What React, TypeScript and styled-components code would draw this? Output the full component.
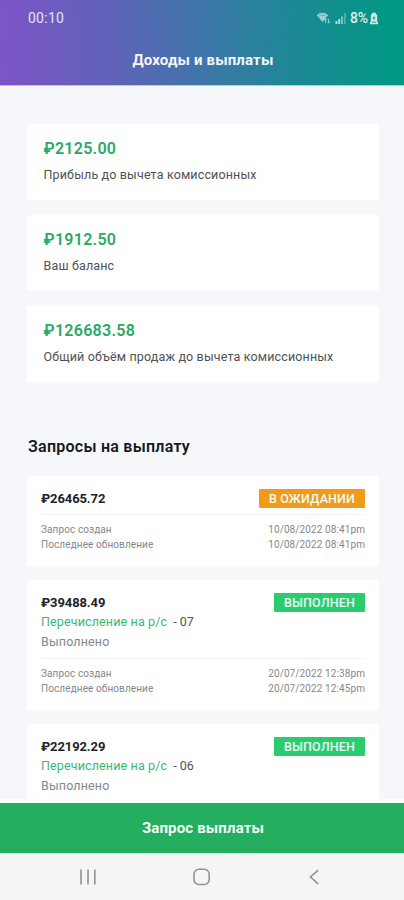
import React from "react";
import styled, { createGlobalStyle } from "styled-components";

const GlobalStyle = createGlobalStyle`
  * { box-sizing: border-box; }
  body { margin: 0; background: #f5f7fb; font-family: Roboto, "Noto Sans", sans-serif; }
`;

const Screen = styled.div`
  width: 404px;
  height: 900px;
  display: flex;
  flex-direction: column;
  overflow: hidden;
  background: #f5f7fb;
`;

const Header = styled.header`
  flex: none;
  height: 86px;
  border-bottom: 1px solid #b9c6dc;
  background: linear-gradient(86deg, #7e54c7 0%, #5f62b8 28%, #3f76aa 50%, #1f8697 70%, #009983 98%);
  color: #f2f7fc;
`;

const StatusBar = styled.div`
  height: 36px;
  padding: 0 25px 0 28px;
  display: flex;
  justify-content: space-between;
  align-items: center;
  font-size: 14px;
  line-height: 16px;
  color: #e0e6f5;
`;

const Clock = styled.span`
  letter-spacing: 0.25px;
`;

const StatusIcons = styled.div`
  display: flex;
  align-items: center;
`;

const Percent = styled.span`
  margin: 0 1px 0 3px;
  font-weight: 500;
  font-size: 14px;
  letter-spacing: -0.1px;
  color: #d9f1ee;
`;

const Title = styled.h1`
  margin: 14px 0 0;
  text-align: center;
  font-size: 15px;
  line-height: 20px;
  font-weight: 700;
  letter-spacing: 0.15px;
  padding-left: 2px;
`;

const Content = styled.main`
  flex: none;
  height: 713px;
  padding: 38px 25px 0 27px;
  overflow: hidden;
`;

const Summary = styled.section`
  display: flex;
  flex-direction: column;
  gap: 15px;
`;

const SummaryCard = styled.article`
  height: 76px;
  padding: 15px 16.5px 0;
  background: #fff;
  border-radius: 2px;
`;

const Sum = styled.div`
  font-size: 16px;
  line-height: 20px;
  font-weight: 600;
  letter-spacing: 0.28px;
  color: #2ba866;
`;

const SumLabel = styled.div`
  margin-top: 8px;
  font-size: 12.5px;
  line-height: 16px;
  letter-spacing: 0.15px;
  color: #505254;
`;

const SectionTitle = styled.h2`
  margin: 55px 0 0 1px;
  font-size: 16px;
  line-height: 20px;
  font-weight: 600;
  letter-spacing: 0.25px;
  color: #17191d;
`;

const Requests = styled.section`
  margin-top: 19px;
  display: flex;
  flex-direction: column;
  gap: 14px;
`;

const RequestCard = styled.article`
  flex: none;
  padding: 13px 14px 14px;
  background: #fff;
  border-radius: 2px;
`;

const TopRow = styled.div`
  display: flex;
  justify-content: space-between;
  height: 20px;
  align-items: flex-start;
`;

const Amount = styled.div`
  font-size: 13px;
  line-height: 20px;
  font-weight: 700;
  letter-spacing: -0.1px;
  color: #222329;
`;

const Badge = styled.span<{ $pending?: boolean }>`
  flex: none;
  width: ${(p) => (p.$pending ? 106 : 91)}px;
  height: 19px;
  border-radius: 1px;
  text-align: center;
  font-size: 12.5px;
  line-height: 19px;
  font-weight: 500;
  letter-spacing: 0.15px;
  color: #e9fff0;
  background: ${(p) => (p.$pending ? "#f29a1b" : "#2bcb70")};
`;

const Transfer = styled.div`
  margin: -1px 0 1px;
  font-size: 12.5px;
  line-height: 19px;
  color: #505254;
  white-space: pre;
  display: flex;
`;

const TransferName = styled.span`
  color: #3cb478;
  margin-right: 6px;
  letter-spacing: 0.14px;
`;

const State = styled.div`
  font-size: 12.5px;
  line-height: 20px;
  letter-spacing: 0.15px;
  color: #85878a;
`;

const Dates = styled.div<{ $gap: number }>`
  margin-top: ${(p) => p.$gap}px;
  padding-top: 7px;
  border-top: 1px solid #f2f3f4;
`;

const DateRow = styled.div`
  display: flex;
  justify-content: space-between;
  font-size: 10px;
  line-height: 15px;
  letter-spacing: 0.1px;
  color: #85878a;
`;

const PayoutButton = styled.button`
  flex: none;
  margin: 0;
  padding: 0 0 0 2px;
  height: 54px;
  border: 0;
  border-top: 4px solid #fbfefd;
  background: #25ae60;
  color: #f1fff6;
  font-family: inherit;
  font-size: 15px;
  font-weight: 700;
  line-height: 20px;
  letter-spacing: 0.15px;
`;

const NavBar = styled.nav`
  flex: 1;
  display: flex;
  align-items: center;
  justify-content: space-between;
  padding: 1px 82px 0 79px;
  background: #f5f5f5;
`;

const WifiIcon = () => (
  <svg width="18" height="14" viewBox="0 0 18 14" fill="none">
    <path d="M0.8 4.2C4 .9 9 .9 12.2 4.2L6.5 11Z" fill="#d5ebee" fillOpacity=".7" />
    <path d="M2.5 5.6C5 3.5 8 3.5 10.5 5.6" stroke="#2d8996" strokeWidth=".6" />
    <path d="M9.5 12V8M8.2 9.2 9.5 7.7l1.3 1.5M12.5 8v4m-1.3-1.3 1.3 1.4 1.3-1.4" stroke="#b8dcde" strokeWidth=".8" />
  </svg>
);

const SignalIcon = () => (
  <svg width="13" height="13" viewBox="0 0 13 13" fill="#b9e1dd">
    <rect x="1.5" y="9" width="1.8" height="3" />
    <rect x="4.3" y="7" width="1.8" height="5" />
    <rect x="7.1" y="4.5" width="1.8" height="7.5" fillOpacity=".7" />
    <rect x="10.2" y="1" width="1.4" height="11" fillOpacity=".5" />
  </svg>
);

const BatteryIcon = () => (
  <svg width="10" height="13" viewBox="0 0 10 13">
    <path d="M3 0.8h3.8v1.2L8.2 3v7H9v2.2H1V10h.8V3L3 2Z" fill="#cdebe7" />
    <path d="M5 4.4v3.4M3.6 6h2.8M2.8 10.2h4.4" stroke="#239489" strokeWidth=".9" fill="none" />
  </svg>
);

const RecentsIcon = () => (
  <svg width="18" height="18" viewBox="0 0 18 18" stroke="#929292" strokeWidth="1.6">
    <path d="M2 1.5v15M9 1.5v15M15.8 1.5v15" />
  </svg>
);

const HomeIcon = () => (
  <svg width="18" height="18" viewBox="0 0 18 18" fill="none" stroke="#929292" strokeWidth="1.6">
    <rect x="1" y="1.3" width="15.2" height="15.2" rx="5" />
  </svg>
);

const BackIcon = () => (
  <svg width="16" height="18" viewBox="0 0 16 18" fill="none" stroke="#929292" strokeWidth="1.6">
    <path d="M12.2 2.2 4.5 9l7.7 6.8" />
  </svg>
);

const totals = [
  { sum: "₽2125.00", label: "Прибыль до вычета комиссионных" },
  { sum: "₽1912.50", label: "Ваш баланс" },
  { sum: "₽126683.58", label: "Общий объём продаж до вычета комиссионных" },
];

interface PayoutRequest {
  amount: string;
  pending?: boolean;
  number?: string;
  created: string;
  updated: string;
}

const requests: PayoutRequest[] = [
  { amount: "₽26465.72", pending: true, created: "10/08/2022 08:41pm", updated: "10/08/2022 08:41pm" },
  { amount: "₽39488.49", number: "07", created: "20/07/2022 12:38pm", updated: "20/07/2022 12:45pm" },
  { amount: "₽22192.29", number: "06", created: "", updated: "" },
];

const Request = ({ amount, pending, number, created, updated }: PayoutRequest) => (
  <RequestCard>
    <TopRow>
      <Amount>{amount}</Amount>
      <Badge $pending={pending}>{pending ? "В ОЖИДАНИИ" : "ВЫПОЛНЕН"}</Badge>
    </TopRow>
    {number && (
      <>
        <Transfer>
          <TransferName>Перечисление на р/с</TransferName>- {number}
        </Transfer>
        <State>Выполнено</State>
      </>
    )}
    {created && (
      <Dates $gap={pending ? 5 : 6}>
        <DateRow><span>Запрос создан</span><span>{created}</span></DateRow>
        <DateRow><span>Последнее обновление</span><span>{updated}</span></DateRow>
      </Dates>
    )}
  </RequestCard>
);

export default function App() {
  return (
    <Screen>
      <GlobalStyle />
      <Header>
        <StatusBar>
          <Clock>00:10</Clock>
          <StatusIcons>
            <WifiIcon />
            <SignalIcon />
            <Percent>8%</Percent>
            <BatteryIcon />
          </StatusIcons>
        </StatusBar>
        <Title>Доходы и выплаты</Title>
      </Header>
      <Content>
        <Summary>
          {totals.map((t) => (
            <SummaryCard key={t.label}>
              <Sum>{t.sum}</Sum>
              <SumLabel>{t.label}</SumLabel>
            </SummaryCard>
          ))}
        </Summary>
        <SectionTitle>Запросы на выплату</SectionTitle>
        <Requests>
          {requests.map((r) => (
            <Request key={r.amount} {...r} />
          ))}
        </Requests>
      </Content>
      <PayoutButton>Запрос выплаты</PayoutButton>
      <NavBar>
        <RecentsIcon />
        <HomeIcon />
        <BackIcon />
      </NavBar>
    </Screen>
  );
}
